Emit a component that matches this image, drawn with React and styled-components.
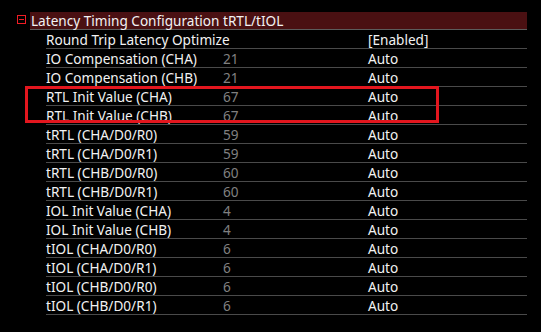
import React from 'react';
import styled, { createGlobalStyle } from 'styled-components';

const GlobalStyle = createGlobalStyle`
  html, body {
    margin: 0;
    padding: 0;
    background: #000;
  }
`;

const Page = styled.div`
  width: 541px;
  height: 332px;
  background: #000;
  padding-top: 12px;
  box-sizing: border-box;
  font-family: "Noto Sans", "Open Sans", sans-serif;
  font-size: 13.6px;
  color: #f2f2f2;
  overflow: hidden;
`;

const Section = styled.div`
  width: 510px;
  margin-left: 17px;
`;

const Header = styled.div`
  display: flex;
  align-items: flex-start;
`;

const Toggle = styled.span`
  width: 7px;
  height: 7px;
  margin-top: 3px;
  border: 1px solid #f01c24;
  position: relative;
  margin-right: 4px;
  flex: none;

  &::after {
    content: '';
    position: absolute;
    left: 1px;
    right: 1px;
    top: 3px;
    height: 1px;
    background: #f01c24;
  }
`;

const HeaderBar = styled.div`
  flex: 1;
  height: 17px;
  line-height: 18px;
  background: #4a1012;
  border-bottom: 1px solid #5c5c5c;
  padding-left: 1px;
  white-space: nowrap;
`;

const Rows = styled.div`
  margin-left: 29px;
`;

const Group = styled.div`
  position: relative;

  &::before {
    content: '';
    position: absolute;
    left: -21px;
    top: -1px;
    width: 408px;
    height: 31px;
    border: 3px solid #e3161e;
    pointer-events: none;
  }
`;

const Row = styled.div`
  display: grid;
  grid-template-columns: 177px 145px 1fr;
  height: 18px;
  line-height: 19px;
  border-bottom: 1px solid #4a4a4a;
  white-space: nowrap;
`;

const Label = styled.span`
  color: #f2f2f2;
`;

const Value = styled.span`
  color: #808080;
`;

const Option = styled.span`
  color: #f2f2f2;
`;

const before = [
  ['Round Trip Latency Optimize', '', '[Enabled]'],
  ['IO Compensation (CHA)', '21', 'Auto'],
  ['IO Compensation (CHB)', '21', 'Auto'],
];

const highlighted = [
  ['RTL Init Value (CHA)', '67', 'Auto'],
  ['RTL Init Value (CHB)', '67', 'Auto'],
];

const after = [
  ['tRTL (CHA/D0/R0)', '59', 'Auto'],
  ['tRTL (CHA/D0/R1)', '59', 'Auto'],
  ['tRTL (CHB/D0/R0)', '60', 'Auto'],
  ['tRTL (CHB/D0/R1)', '60', 'Auto'],
  ['IOL Init Value (CHA)', '4', 'Auto'],
  ['IOL Init Value (CHB)', '4', 'Auto'],
  ['tIOL (CHA/D0/R0)', '6', 'Auto'],
  ['tIOL (CHA/D0/R1)', '6', 'Auto'],
  ['tIOL (CHB/D0/R0)', '6', 'Auto'],
  ['tIOL (CHB/D0/R1)', '6', 'Auto'],
];

const renderRow = ([label, value, option]) => (
  <Row key={label}>
    <Label>{label}</Label>
    <Value>{value}</Value>
    <Option>{option}</Option>
  </Row>
);

export default function App() {
  return (
    <Page>
      <GlobalStyle />
      <Section>
        <Header>
          <Toggle />
          <HeaderBar>Latency Timing Configuration tRTL/tIOL</HeaderBar>
        </Header>
        <Rows>
          {before.map(renderRow)}
          <Group>{highlighted.map(renderRow)}</Group>
          {after.map(renderRow)}
        </Rows>
      </Section>
    </Page>
  );
}
